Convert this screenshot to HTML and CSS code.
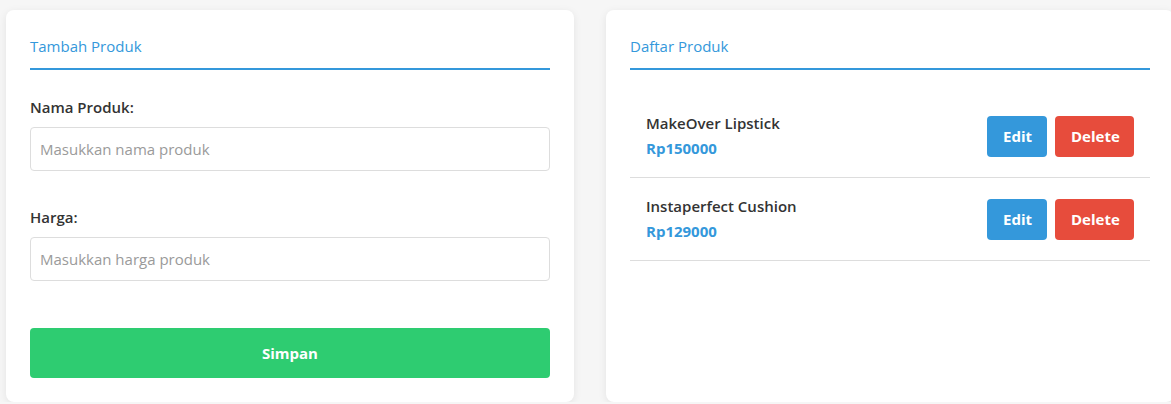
FILE: index.html
```html
<!DOCTYPE html>
<html lang="id">
<head>
<meta charset="utf-8">
<title>Produk</title>
<link rel="stylesheet" href="styles.css">
</head>
<body>
<div class="container">
  <section class="card">
    <h2 class="card-title">Tambah Produk</h2>
    <form class="form">
      <div class="form-group">
        <label class="label" for="nama">Nama Produk:</label>
        <input class="input" id="nama" type="text" placeholder="Masukkan nama produk">
      </div>
      <div class="form-group">
        <label class="label" for="harga">Harga:</label>
        <input class="input" id="harga" type="text" placeholder="Masukkan harga produk">
      </div>
      <button class="btn btn-save" type="button">Simpan</button>
    </form>
  </section>
  <section class="card">
    <h2 class="card-title">Daftar Produk</h2>
    <ul class="list">
      <li class="item">
        <div class="item-info">
          <div class="item-name">MakeOver Lipstick</div>
          <div class="item-price">Rp150000</div>
        </div>
        <div class="item-actions">
          <button class="btn btn-edit" type="button">Edit</button>
          <button class="btn btn-delete" type="button">Delete</button>
        </div>
      </li>
      <li class="item">
        <div class="item-info">
          <div class="item-name">Instaperfect Cushion</div>
          <div class="item-price">Rp129000</div>
        </div>
        <div class="item-actions">
          <button class="btn btn-edit" type="button">Edit</button>
          <button class="btn btn-delete" type="button">Delete</button>
        </div>
      </li>
    </ul>
  </section>
</div>
</body>
</html>
```
FILE: styles.css
```css
* { box-sizing: border-box; }
html, body { margin: 0; padding: 0; }
body {
  background: #f6f6f6;
  font-family: "Open Sans", "Noto Sans", sans-serif;
  color: #333;
  overflow: hidden;
}
.container {
  display: flex;
  gap: 32px;
  padding: 10px 0 0 6px;
  width: 1200px;
}
.card {
  width: 568px;
  flex: none;
  background: #fff;
  border-radius: 8px;
  box-shadow: 0 2px 8px rgba(0,0,0,0.08);
  padding: 24px;
}
.card-title {
  margin: 0 0 25px;
  font-size: 15px;
  font-weight: 400;
  line-height: 24px;
  color: #3498db;
  padding-bottom: 10px;
  border-bottom: 2px solid #3498db;
}
.form { display: flex; flex-direction: column; }
.form-group { display: flex; flex-direction: column; margin-bottom: 34px; }
.form-group + .form-group { margin-bottom: 47px; }
.label {
  font-size: 15px;
  font-weight: 600;
  line-height: 24px;
  margin-bottom: 8px;
  color: #333;
}
.input {
  height: 44px;
  padding: 10px 9px;
  border: 1px solid #ddd;
  border-radius: 4px;
  font-family: inherit;
  font-size: 15px;
  color: #333;
  outline: none;
}
.input::placeholder { color: #9a9a9a; }
.btn {
  border: none;
  border-radius: 4px;
  color: #fff;
  font-family: inherit;
  font-size: 15px;
  font-weight: 700;
  cursor: pointer;
}
.btn-save {
  background: #2ecc71;
  height: 50px;
  width: 100%;
}
.list { list-style: none; margin: 0; padding: 0; }
.item {
  display: flex;
  align-items: center;
  justify-content: space-between;
  padding: 16px;
  border-bottom: 1px solid #ddd;
  height: 83px;
}
.item-name {
  font-size: 15px;
  font-weight: 600;
  line-height: 25px;
  color: #333;
}
.item-price {
  font-size: 15px;
  font-weight: 700;
  line-height: 25px;
  color: #3498db;
}
.item-actions { display: flex; gap: 8px; }
.btn-edit, .btn-delete {
  height: 41px;
  padding: 0 16px;
}
.btn-edit { background: #3498db; width: 60px; }
.btn-delete { background: #e74c3c; width: 79px; }
```
